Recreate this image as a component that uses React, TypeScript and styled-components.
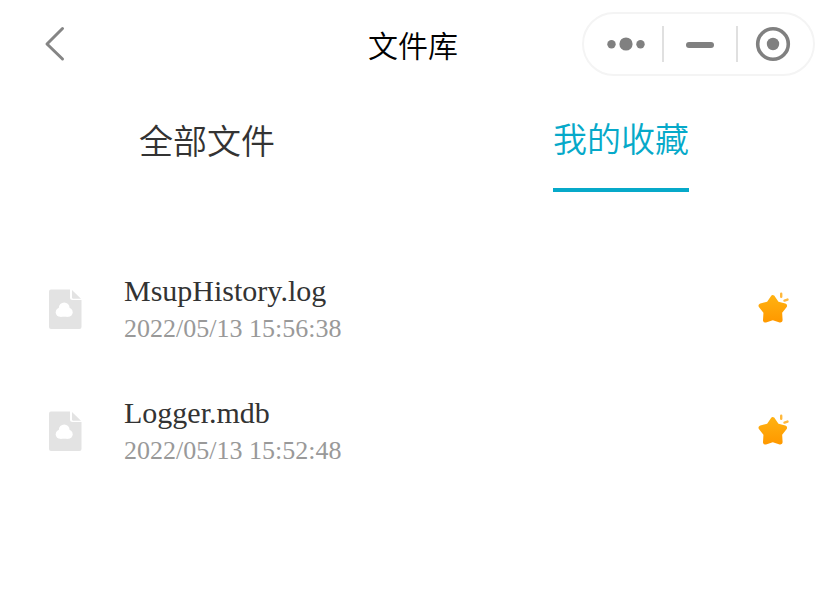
import React, { useState } from "react";
import styled, { createGlobalStyle } from "styled-components";

const GlobalStyle = createGlobalStyle`
  * { box-sizing: border-box; }
  body {
    margin: 0;
    background: #ffffff;
    color: #333333;
    font-family: "Liberation Serif", "Noto Sans CJK SC", serif;
  }
  button {
    display: flex;
    align-items: center;
    justify-content: center;
    margin: 0;
    padding: 0;
    border: 0;
    background: none;
    color: inherit;
    font: inherit;
    cursor: pointer;
  }
`;

const Header = styled.header`
  display: grid;
  grid-template-columns: 1fr auto 1fr;
  align-items: center;
  height: 88px;
  padding: 0 13px 0 40px;
`;

const BackButton = styled.button`
  width: 28px;
  height: 40px;
`;

const Title = styled.h1`
  margin: 0;
  padding-right: 29px;
  color: #000000;
  font-family: "Noto Sans CJK SC", sans-serif;
  font-size: 30px;
  font-weight: 350;
  line-height: 42px;
`;

const Capsule = styled.div`
  display: grid;
  grid-template-columns: 72px 74px 1fr;
  align-items: center;
  justify-self: end;
  width: 233px;
  height: 64px;
  padding: 0 6px;
  border: 2px solid #f4f4f4;
  border-radius: 32px;
`;

const CapsuleButton = styled.button`
  height: 36px;

  && + & {
    border-left: 2px solid #e0e0e0;
  }
`;

const Tabs = styled.nav`
  display: flex;
  align-items: center;
`;

const TabCell = styled.div`
  display: flex;
  flex: 1;
  justify-content: center;
`;

const Tab = styled.button<{ $active: boolean }>`
  && {
    border-bottom: ${(p) => (p.$active ? "4px solid #06a9c9" : "0")};
    color: ${(p) => (p.$active ? "#06a9c9" : "#333333")};
    font-family: "Noto Sans CJK SC", sans-serif;
    font-size: 34px;
    font-weight: 350;
    line-height: 100px;
  }
`;

const FileList = styled.ul`
  margin: 0;
  padding: 56px 38px 0 48px;
  list-style: none;
`;

const FileRow = styled.li`
  display: flex;
  align-items: center;
  height: 122px;
`;

const FileInfo = styled.div`
  flex: 1;
  padding: 2px 0 0 42px;
`;

const FileName = styled.div`
  color: #333333;
  font-size: 30px;
  line-height: 38px;
`;

const FileTime = styled.time`
  display: block;
  color: #999999;
  font-size: 26px;
  line-height: 38px;
`;

const StarButton = styled.button`
  width: 34px;
  height: 40px;
`;

const BackIcon = () => (
  <svg width="28" height="40" viewBox="0 0 28 40" fill="none" aria-hidden="true">
    <path d="M22.500 4.500 7 20l15.500 15" stroke="#858585" strokeWidth="3" strokeLinecap="round" strokeLinejoin="round" />
  </svg>
);

const MoreIcon = () => (
  <svg width="40" height="36" viewBox="0 0 40 36" fill="#808080" aria-hidden="true">
    <circle cx="5.500" cy="18.300" r="4.200" />
    <circle cx="20" cy="18" r="6.600" />
    <circle cx="34.500" cy="18.300" r="4.200" />
  </svg>
);

const MinimizeIcon = () => (
  <svg width="30" height="36" viewBox="0 0 30 36" aria-hidden="true">
    <rect x="1" y="16" width="28" height="6" rx="3" fill="#808080" />
  </svg>
);

const CloseIcon = () => (
  <svg width="36" height="36" viewBox="0 0 36 36" aria-hidden="true">
    <circle cx="18" cy="18" r="15.300" fill="none" stroke="#808080" strokeWidth="3.600" />
    <circle cx="18" cy="18" r="6.200" fill="#808080" />
  </svg>
);

const FileIcon = () => (
  <svg width="34" height="42" viewBox="0 0 34 42" aria-hidden="true">
    <path d="M3 1.500H22v8a2.500 2.500 0 0 0 2.500 2.500h9v27a2 2 0 0 1-2 2H3a2 2 0 0 1-2-2v-35.500A2 2 0 0 1 3 1.500Z" fill="#e3e3e3" />
    <path d="M24 2 33 10.700h-7.500a1.500 1.500 0 0 1-1.500-1.500Z" fill="#e3e3e3" />
    <g fill="#ffffff">
      <circle cx="16.200" cy="19.800" r="5.400" />
      <circle cx="12.200" cy="24.200" r="4.500" />
      <circle cx="20.200" cy="24.200" r="4.500" />
      <rect x="12.200" y="21" width="8" height="7.700" />
    </g>
  </svg>
);

const StarIcon = () => (
  <svg width="34" height="40" viewBox="0 0 34 40" aria-hidden="true">
    <defs>
      <linearGradient id="starFill" x1="0" y1="0" x2="0" y2="1">
        <stop offset="0" stopColor="#ffb010" />
        <stop offset="1" stopColor="#ff9a00" />
      </linearGradient>
    </defs>
    <path
      d="M16.800 8.500 20.900 14.600 28.700 16.800 23.800 23 24.300 31.200 16.800 28.800 9.300 31.200 9.800 23 4.900 16.800 12.700 14.600Z"
      fill="url(#starFill)"
      stroke="url(#starFill)"
      strokeWidth="4.600"
      strokeLinejoin="round"
    />
    <path d="M25.200 4.800v3M28.500 11.600l3-1" stroke="#ffb83c" strokeWidth="2.400" strokeLinecap="round" />
  </svg>
);

const tabs = ["全部文件", "我的收藏"];

const files = [
  { name: "MsupHistory.log", time: "2022/05/13 15:56:38" },
  { name: "Logger.mdb", time: "2022/05/13 15:52:48" },
];

export default function App() {
  const [active, setActive] = useState(1);

  return (
    <>
      <GlobalStyle />
      <Header>
        <BackButton aria-label="返回"><BackIcon /></BackButton>
        <Title>文件库</Title>
        <Capsule>
          <CapsuleButton aria-label="更多"><MoreIcon /></CapsuleButton>
          <CapsuleButton aria-label="最小化"><MinimizeIcon /></CapsuleButton>
          <CapsuleButton aria-label="关闭"><CloseIcon /></CapsuleButton>
        </Capsule>
      </Header>
      <Tabs>
        {tabs.map((label, i) => (
          <TabCell key={label}>
            <Tab $active={i === active} aria-pressed={i === active} onClick={() => setActive(i)}>
              {label}
            </Tab>
          </TabCell>
        ))}
      </Tabs>
      <main>
        <FileList>
          {files.map((file) => (
            <FileRow key={file.name}>
              <FileIcon />
              <FileInfo>
                <FileName>{file.name}</FileName>
                <FileTime>{file.time}</FileTime>
              </FileInfo>
              <StarButton aria-label={`取消收藏 ${file.name}`}><StarIcon /></StarButton>
            </FileRow>
          ))}
        </FileList>
      </main>
    </>
  );
}
